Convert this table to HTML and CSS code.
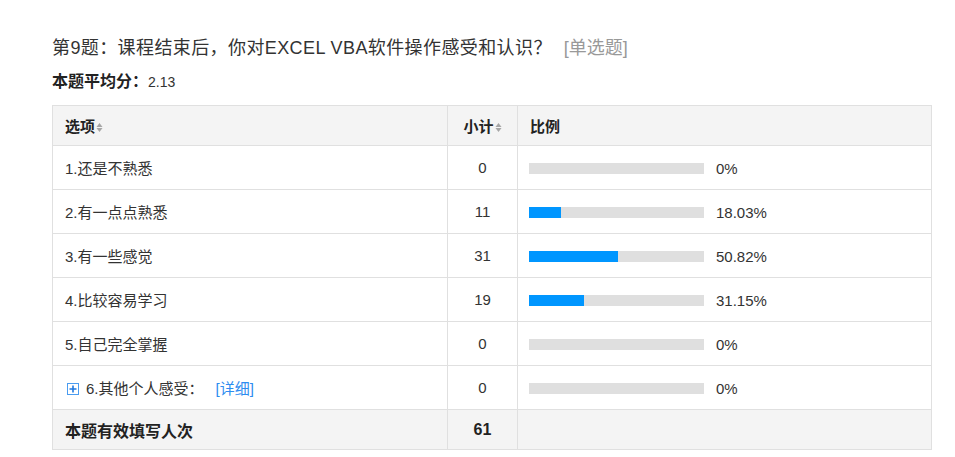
FILE: index.html
```html
<!DOCTYPE html>
<html lang="zh-CN">
<head>
<meta charset="utf-8">
<title>第9题</title>
<link rel="stylesheet" href="styles.css">
</head>
<body>
<div class="question">
  <div class="q-title">第9题：课程结束后，你对EXCEL VBA软件操作感受和认识？<span class="q-type">[单选题]</span></div>
  <div class="q-avg"><b>本题平均分：</b>2.13</div>
  <table class="stats">
    <colgroup><col class="c-opt"><col class="c-cnt"><col class="c-pct"></colgroup>
    <thead>
      <tr>
        <th class="opt">选项<svg class="sort" width="7" height="11" viewBox="0 0 7 11"><path d="M0.5 5L3.5 1L6.5 5Z M0.5 6L3.5 10L6.5 6Z" fill="#a6a6a6"/></svg></th>
        <th class="cnt">小计<svg class="sort" width="7" height="11" viewBox="0 0 7 11"><path d="M0.5 5L3.5 1L6.5 5Z M0.5 6L3.5 10L6.5 6Z" fill="#a6a6a6"/></svg></th>
        <th class="pct">比例</th>
      </tr>
    </thead>
    <tbody>
      <tr><td class="opt">1.还是不熟悉</td><td class="cnt">0</td><td class="pct"><div class="bar"><div class="fill" style="width:0%"></div></div><span class="val">0%</span></td></tr>
      <tr><td class="opt">2.有一点点熟悉</td><td class="cnt">11</td><td class="pct"><div class="bar"><div class="fill" style="width:18.03%"></div></div><span class="val">18.03%</span></td></tr>
      <tr><td class="opt">3.有一些感觉</td><td class="cnt">31</td><td class="pct"><div class="bar"><div class="fill" style="width:50.82%"></div></div><span class="val">50.82%</span></td></tr>
      <tr><td class="opt">4.比较容易学习</td><td class="cnt">19</td><td class="pct"><div class="bar"><div class="fill" style="width:31.15%"></div></div><span class="val">31.15%</span></td></tr>
      <tr><td class="opt">5.自己完全掌握</td><td class="cnt">0</td><td class="pct"><div class="bar"><div class="fill" style="width:0%"></div></div><span class="val">0%</span></td></tr>
      <tr><td class="opt"><span class="expand"><svg width="12" height="12" viewBox="0 0 12 12"><rect x="0.5" y="0.5" width="11" height="11" fill="#fff" stroke="#4a9cf0"/><path d="M6 2.5v7M2.5 6h7" stroke="#1f78e0" stroke-width="1.6"/></svg></span>6.其他个人感受：<a class="detail">[详细]</a></td><td class="cnt">0</td><td class="pct"><div class="bar"><div class="fill" style="width:0%"></div></div><span class="val">0%</span></td></tr>
    </tbody>
    <tfoot>
      <tr><td class="opt">本题有效填写人次</td><td class="cnt">61</td><td class="pct"></td></tr>
    </tfoot>
  </table>
</div>
</body>
</html>
```

FILE: styles.css
```css
html, body {
  margin: 0;
  padding: 0;
  background: #fff;
}
body {
  font-family: "Liberation Sans", "Noto Sans CJK SC", sans-serif;
  color: #333;
}
.question {
  padding: 36px 0 0 52px;
}
.q-title {
  font-size: 18px;
  line-height: 24px;
  height: 24px;
  color: #333;
  letter-spacing: 0.4px;
}
.q-type {
  color: #999;
  margin-left: 12px;
  letter-spacing: 0;
}
.q-avg {
  margin-top: 11px;
  font-size: 14px;
  line-height: 22px;
  height: 22px;
  color: #333;
}
.q-avg b {
  font-size: 16px;
  font-weight: bold;
  color: #222;
}
.stats {
  margin-top: 12px;
  border-collapse: collapse;
  width: 879px;
  table-layout: fixed;
  font-size: 15px;
}
.c-opt { width: 395px; }
.c-cnt { width: 70px; }
.c-pct { width: 414px; }
.stats th, .stats td {
  border: 1px solid #e0e0e0;
  padding: 0 12px;
  text-align: left;
  vertical-align: middle;
  white-space: nowrap;
}
.stats th {
  height: 39px;
  background: #f4f4f4;
  font-weight: bold;
  font-size: 15px;
  color: #222;
}
.stats tbody td {
  height: 43px;
  color: #333;
}
.stats tfoot td {
  height: 39px;
  background: #f4f4f4;
  font-weight: bold;
  font-size: 16px;
  color: #222;
}
.stats .cnt {
  text-align: center;
  padding: 0;
}
.stats td.pct {
  padding-left: 11px;
}
.sort {
  display: inline-block;
  vertical-align: -1px;
  margin-left: 1px;
}
.bar {
  display: inline-block;
  vertical-align: middle;
  width: 175px;
  height: 11px;
  background: #dfdfdf;
  overflow: hidden;
}
.fill {
  height: 100%;
  background: #0096ff;
}
.val {
  display: inline-block;
  vertical-align: middle;
  margin-left: 12px;
}
.expand {
  display: inline-block;
  vertical-align: middle;
  margin: -3px 7px 0 2px;
  line-height: 0;
}
.detail {
  color: #2d8cf0;
  margin-left: 12px;
  cursor: pointer;
}
```
